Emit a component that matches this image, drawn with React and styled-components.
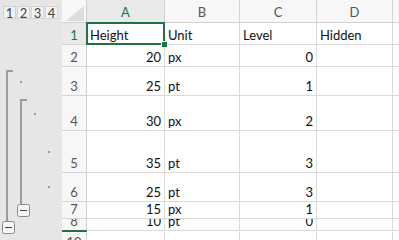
import React from 'react'
import styled, { createGlobalStyle } from 'styled-components'

const Global = createGlobalStyle`
html, body { margin: 0; padding: 0; background: #ffffff; overflow: hidden; }
body { font-family: Lato, "Liberation Sans", sans-serif; }
`

const Page = styled.div`
display: flex;
width: 399px;
height: 240px;
overflow: hidden;
`

const Gutter = styled.div`
position: relative;
width: 62px;
flex: none;
background-color: #e6e6e6;
`

const LevelBar = styled.div`
display: flex;
gap: 1px;
padding: 6px 0 0 3px;
`

const LevelButton = styled.div`
width: 11px;
height: 11px;
border: 1px solid #d2d2d2;
background-color: #f3f3f3;
color: #444444;
font-size: 13px;
line-height: 12px;
text-align: center;
`

const Outline = styled.svg`
position: absolute;
left: 0;
top: 0;
`

const Sheet = styled.div`
display: grid;
grid-template-columns: 25px 78px 75px 77px 76px 60px;
grid-template-rows: ${p => p.$rows};
`

const Corner = styled.div`
background-color: #f7f7f7;
border-right: 1px solid #cfcfcf;
border-bottom: 1px solid #cfcfcf;
display: flex;
align-items: flex-end;
justify-content: flex-end;
padding: 0 2px 1px 0;
`

const ColHead = styled.div`
background-color: ${p => (p.$active ? '#e9e9e9' : '#f7f7f7')};
color: ${p => (p.$active ? '#217346' : '#555555')};
border-right: 1px solid #d4d4d4;
border-bottom: 1px solid #cfcfcf;
font-size: 13px;
display: flex;
align-items: center;
justify-content: center;
padding-top: 1px;
`

const RowHead = styled.div`
background-color: ${p => (p.$active ? '#e9e9e9' : '#f7f7f7')};
color: ${p => (p.$active ? '#217346' : '#555555')};
border-right: 1px solid #cfcfcf;
border-bottom: 1px solid ${p => (p.$hiddenNext ? '#217346' : '#d4d4d4')};
font-size: 13px;
line-height: 15px;
display: flex;
align-items: flex-end;
justify-content: center;
padding-bottom: 1px;
overflow: hidden;
`

const HiddenMark = styled.div`
background-color: ${p => (p.$head ? '#217346' : 'transparent')};
`

const Cell = styled.div`
position: relative;
z-index: ${p => (p.$selected ? 1 : 0)};
border-right: 1px solid #dadada;
border-bottom: 1px solid #dadada;
font-size: 13px;
line-height: 15px;
color: #111111;
display: flex;
align-items: flex-end;
justify-content: ${p => (p.$num ? 'flex-end' : 'flex-start')};
padding: 0 3px 1px 3px;
overflow: ${p => (p.$selected ? 'visible' : 'hidden')};
`

const Selection = styled.div`
position: absolute;
left: -1px;
top: -1px;
right: -1px;
bottom: -1px;
border: 2px solid #217346;
pointer-events: none;
`

const Handle = styled.div`
position: absolute;
right: -5px;
bottom: -5px;
width: 5px;
height: 5px;
background-color: #217346;
border: 1px solid #ffffff;
`

const rows = [
  { n: 1, h: 22, a: 'Height', b: 'Unit', c: 'Level', d: 'Hidden' },
  { n: 2, h: 22, a: 20, b: 'px', c: 0 },
  { n: 3, h: 29, a: 25, b: 'pt', c: 1 },
  { n: 4, h: 35, a: 30, b: 'px', c: 2 },
  { n: 5, h: 42, a: 35, b: 'pt', c: 3 },
  { n: 6, h: 29, a: 25, b: 'pt', c: 3 },
  { n: 7, h: 17, a: 15, b: 'px', c: 1 },
  { n: 8, h: 12, a: 10, b: 'pt', c: 0, hiddenNext: true },
  { hidden: true, h: 1 },
  { n: 10, h: 20 },
]

const template = ['23px', ...rows.map(r => r.h + 'px')].join(' ')
const isNum = v => typeof v === 'number'

function OutlineBars() {
  const grey = '#9b9b9b'
  return (
    <Outline width="62" height="240" viewBox="0 0 62 240">
      <path d="M7 71 V221 M6 71 H13" stroke={grey} strokeWidth="2" fill="none" />
      <path d="M21 100 V204 M20 100 H27" stroke={grey} strokeWidth="2" fill="none" />
      <rect x="20" y="81" width="2" height="2" fill="#999999" />
      <rect x="34" y="113" width="2" height="2" fill="#999999" />
      <rect x="48" y="151" width="2" height="2" fill="#999999" />
      <rect x="48" y="186" width="2" height="2" fill="#999999" />
      <rect x="2.5" y="221.5" width="12" height="12" rx="2" fill="#f6f6f6" stroke="#8a8a8a" />
      <path d="M5 227.5 H12" stroke="#444" strokeWidth="1" />
      <rect x="17.5" y="204.5" width="12" height="12" rx="2" fill="#f6f6f6" stroke="#8a8a8a" />
      <path d="M20 210.5 H27" stroke="#444" strokeWidth="1" />
    </Outline>
  )
}

export default function App() {
  return (
    <Page>
      <Global />
      <Gutter>
        <LevelBar>
          {[1, 2, 3, 4].map(l => (
            <LevelButton key={l}>{l}</LevelButton>
          ))}
        </LevelBar>
        <OutlineBars />
      </Gutter>
      <Sheet $rows={template}>
        <Corner>
          <svg width="18" height="15" viewBox="0 0 18 15">
            <path d="M18 0 V15 H0 Z" fill="#dcdcdc" />
          </svg>
        </Corner>
        {['A', 'B', 'C', 'D', ''].map(c => (
          <ColHead key={c} $active={c === 'A'}>{c}</ColHead>
        ))}
        {rows.map((r, i) =>
          r.hidden ? (
            <React.Fragment key={i}>
              <HiddenMark $head />
              <HiddenMark />
              <HiddenMark />
              <HiddenMark />
              <HiddenMark />
              <HiddenMark />
            </React.Fragment>
          ) : (
            <React.Fragment key={i}>
              <RowHead $active={r.n === 1} $hiddenNext={r.hiddenNext}>{r.n}</RowHead>
              <Cell $num={isNum(r.a)} $selected={r.n === 1}>
                {r.a}
                {r.n === 1 && (
                  <Selection>
                    <Handle />
                  </Selection>
                )}
              </Cell>
              <Cell $num={isNum(r.b)}>{r.b}</Cell>
              <Cell $num={isNum(r.c)}>{r.c}</Cell>
              <Cell $num={isNum(r.d)}>{r.d}</Cell>
              <Cell />
            </React.Fragment>
          )
        )}
      </Sheet>
    </Page>
  )
}
